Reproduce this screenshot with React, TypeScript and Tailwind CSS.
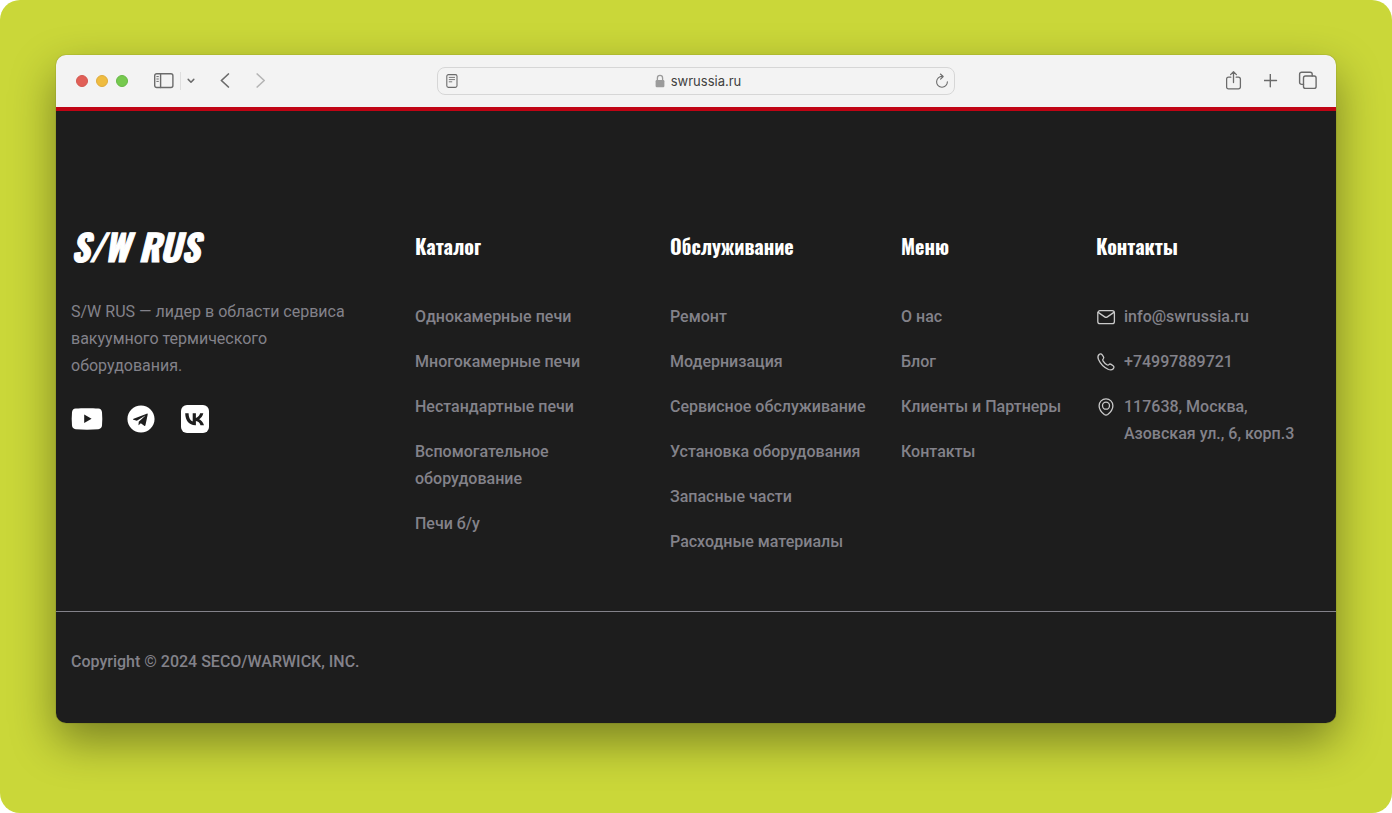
import React from 'react';
import { clsx } from "clsx";
import { FaTelegram } from "react-icons/fa";

interface FooterLink {
    label: string;
    href: string;
}

interface FooterSection {
    title: string;
    links: FooterLink[];
}

const SECTIONS: FooterSection[] = [
    {
        title: "Каталог",
        links: [
            { label: "Однокамерные печи", href: "#single" },
            { label: "Многокамерные печи", href: "#multi" },
            { label: "Нестандартные печи", href: "#custom" },
            { label: "Вспомогательное оборудование", href: "#auxiliary" },
            { label: "Печи б/у", href: "#used" },
        ],
    },
    {
        title: "Обслуживание",
        links: [
            { label: "Ремонт", href: "#repair" },
            { label: "Модернизация", href: "#upgrade" },
            { label: "Сервисное обслуживание", href: "#service" },
            { label: "Установка оборудования", href: "#install" },
            { label: "Запасные части", href: "#parts" },
            { label: "Расходные материалы", href: "#supplies" },
        ],
    },
    {
        title: "Меню",
        links: [
            { label: "О нас", href: "#about" },
            { label: "Блог", href: "#blog" },
            { label: "Клиенты и Партнеры", href: "#clients" },
            { label: "Контакты", href: "#contacts" },
        ],
    },
];

const iconProps = {
    fill: "none",
    stroke: "currentColor",
    strokeLinecap: "round" as const,
    strokeLinejoin: "round" as const,
    "aria-hidden": true,
};

const ToolButton = ({ label, className, children }: { label: string; className?: string; children: React.ReactNode }) => (
    <button type="button" aria-label={label} className={clsx("flex h-5 shrink-0 items-center justify-center text-[#6b6b6b]", className)}>
        {children}
    </button>
);

const BrowserBar = () => (
    <header className="grid h-[52px] grid-cols-[1fr_minmax(0,518px)_1fr] items-center bg-[#f3f3f3]">
        <div className="flex items-center pl-5">
            <div className="flex gap-2">
                <button type="button" aria-label="Закрыть" className="size-3 rounded-full border border-[#d35850] bg-[#e15f57]" />
                <button type="button" aria-label="Свернуть" className="size-3 rounded-full border border-[#dfac3c] bg-[#efbc40]" />
                <button type="button" aria-label="Развернуть" className="size-3 rounded-full border border-[#67b846] bg-[#76c94e]" />
            </div>
            <ToolButton label="Боковая панель" className="ml-6 w-6">
                <svg width="20" height="16" viewBox="0 0 20 16" strokeWidth="1.4" {...iconProps}>
                    <rect x="0.7" y="0.7" width="18.2" height="13.8" rx="2" />
                    <path d="M6.6.7v13.8" />
                    <path d="M2.8 3.6h1.6M2.8 6h1.6M2.8 8.4h1.6" strokeWidth="1" />
                </svg>
            </ToolButton>
            <span className="ml-1 h-[18px] w-px bg-[#dedede]" />
            <ToolButton label="Группы вкладок" className="ml-1 w-3">
                <svg width="8" height="6" viewBox="0 0 8 6" strokeWidth="1.5" {...iconProps}>
                    <path d="M1.2 1.4 4 4.2l2.8-2.800" />
                </svg>
            </ToolButton>
            <ToolButton label="Назад" className="ml-5 w-4">
                <svg width="10" height="16" viewBox="0 0 10 16" strokeWidth="1.7" {...iconProps}>
                    <path d="M8.400 1 1.400 7.500l7 6.500" />
                </svg>
            </ToolButton>
            <ToolButton label="Вперёд" className="ml-5 w-4">
                <svg className="text-[#b5b5b5]" width="10" height="16" viewBox="0 0 10 16" strokeWidth="1.7" {...iconProps}>
                    <path d="m1.200 1 7 6.500-7 6.500" />
                </svg>
            </ToolButton>
        </div>

        <div className="flex h-7 items-center justify-between rounded-lg border border-[#d6d6d6] px-1">
            <ToolButton label="Режим чтения" className="w-5">
                <svg width="12" height="14" viewBox="0 0 12 14" strokeWidth="1.1" {...iconProps}>
                    <rect x="0.8" y="0.6" width="10.2" height="12.8" rx="1.6" />
                    <path d="M3.2 3.4h5.4M3.2 5.6h5.4M3.2 7.8h2.6" strokeWidth="0.9" />
                </svg>
            </ToolButton>
            <label className="flex items-center gap-1.5">
                <svg width="10" height="14" viewBox="0 0 10 14" aria-hidden="true">
                    <path d="M2.4 7V4a2.6 2.6 0 0 1 5.2 0v3" fill="none" stroke="#9b9b9b" strokeWidth="1.3" />
                    <rect x="0.6" y="6" width="8.8" height="7.2" rx="1.2" fill="#9b9b9b" />
                </svg>
                <input
                    type="text"
                    aria-label="Адрес сайта"
                    defaultValue="swrussia.ru"
                    className="field-sizing-content bg-transparent font-['Inter',sans-serif] text-[13px] leading-5 text-[#3f3f3f] outline-none"
                />
            </label>
            <ToolButton label="Обновить" className="w-4">
                <svg width="14" height="16" viewBox="0 0 14 16" strokeWidth="1.1" {...iconProps}>
                    <path d="M7.2 3.4A5.4 5.4 0 1 0 12.4 8.8" />
                    <path d="M5.4 1 8.200 3.500 5.600 6.200" />
                </svg>
            </ToolButton>
        </div>

        <div className="flex items-center justify-end gap-[17px] pr-[18px]">
            <ToolButton label="Поделиться" className="w-5">
                <svg width="16" height="20" viewBox="0 0 16 20" strokeWidth="1.3" {...iconProps}>
                    <path d="M4.8 6.200H2.500A1.900 1.900 0 0 0 .600 8.100v7.800a1.900 1.900 0 0 0 1.900 1.900h10a1.900 1.900 0 0 0 1.900-1.900V8.100a1.900 1.900 0 0 0-1.900-1.900h-2.300" />
                    <path d="M7.500 11.600V.8M4.600 3.600 7.500.8l2.900 2.800" />
                </svg>
            </ToolButton>
            <ToolButton label="Новая вкладка" className="w-5">
                <svg width="14" height="14" viewBox="0 0 14 14" strokeWidth="1.4" {...iconProps}>
                    <path d="M6.300.3v12.400M.1 6.500h12.400" />
                </svg>
            </ToolButton>
            <ToolButton label="Обзор вкладок" className="w-5">
                <svg width="20" height="20" viewBox="0 0 20 20" strokeWidth="1.4" {...iconProps}>
                    <rect x="5.500" y="5" width="12.600" height="12.400" rx="2" />
                    <path d="M5.500 13.400H3.600a2 2 0 0 1-2-2V3.200a2 2 0 0 1 2-2h8.600a2 2 0 0 1 2 2V5" />
                </svg>
            </ToolButton>
        </div>
    </header>
);

const Socials = () => (
    <div className="mt-6 flex gap-[22px]">
        <a href="#youtube" aria-label="YouTube" className="flex size-8 items-center justify-center">
            <svg width="32" height="32" viewBox="0 0 32 32" aria-hidden="true">
                <path fill="#fff" fillRule="evenodd" d="M16 5.200c4 0 8.300.1 11.300.4 2.200.2 3.500 1.500 3.700 3.700.4 4.400.4 9 0 13.300-.2 2.200-1.500 3.500-3.700 3.700-7.500.6-15.100.6-22.600 0C2.500 26.100 1.200 24.800 1 22.600c-.4-4.400-.4-9 0-13.300.2-2.200 1.500-3.500 3.700-3.700 3-.3 7.300-.4 11.300-.4Zm-2.800 6.400v8.400l7.400-4.200-7.400-4.200Z" />
            </svg>
        </a>
        <a href="#telegram" aria-label="Telegram" className="flex size-8 items-center justify-center text-white">
            <FaTelegram size={28} />
        </a>
        <a href="#vk" aria-label="VK" className="flex size-8 items-center justify-center">
            <svg width="32" height="32" viewBox="0 0 32 32" aria-hidden="true">
                <rect x="2" y="2" width="28" height="28" rx="6" fill="#fff" />
                <path fill="#1d1d1d" d="M16.300 22.200c-6.400 0-9.900-4.400-10.100-11.900h3.400c.1 5.400 2.400 7.600 4.100 8.100v-8.100h3.200v4.600c1.800-.2 3.600-2.300 4.200-4.600h3.200c-.5 2.900-2.600 5-4.100 5.900 1.500.7 3.900 2.600 4.800 6h-3.500c-.7-2.200-2.400-3.900-4.600-4.100v4.100Z" />
            </svg>
        </a>
    </div>
);

const ColumnTitle = ({ children }: { children: React.ReactNode }) => (
    <h2 className="mb-11 font-['Oswald','Roboto',sans-serif] text-xl leading-[26px] font-bold text-white">
        {children}
    </h2>
);

const Contacts = () => (
    <address className="pt-1 not-italic">
        <ColumnTitle>Контакты</ColumnTitle>
        <ul className="flex flex-col gap-[18px] font-medium">
            <li>
                <a href="mailto:info@swrussia.ru" className="flex gap-2">
                    <svg className="mt-1 shrink-0 text-[#c9c9c9]" width="20" height="20" viewBox="0 0 20 20" strokeWidth="1.3" {...iconProps}>
                        <rect x="1.8" y="3.7" width="16.6" height="13" rx="2.2" />
                        <path d="m2.200 5.400 6.500 4.500a2.400 2.400 0 0 0 2.700 0l6.500-4.500" />
                    </svg>
                    info@swrussia.ru
                </a>
            </li>
            <li>
                <a href="tel:+74997889721" className="flex gap-2">
                    <svg className="mt-1 shrink-0 text-[#c9c9c9]" width="20" height="20" viewBox="0 0 20 20" strokeWidth="1.3" {...iconProps}>
                        <path d="M3.100 2.500c1-.9 2.200-.8 2.900.2l1.400 2c.5.700.4 1.600-.2 2.200-.7.600-.7 1.200-.2 2 1 1.600 2.300 2.900 3.900 3.900.8.500 1.400.5 2-.2.600-.6 1.500-.7 2.200-.2l2 1.400c1 .7 1.100 1.900.2 2.900-1.300 1.400-3 1.500-4.800.8C7.800 15.500 4.600 12.300 2.400 7.300c-.7-1.800-.7-3.500.7-4.800Z" />
                    </svg>
                    +74997889721
                </a>
            </li>
            <li className="flex gap-2">
                <svg className="mt-1 shrink-0 text-[#c9c9c9]" width="20" height="20" viewBox="0 0 20 20" strokeWidth="1.3" {...iconProps}>
                    <path d="M10 1.900c-3.900 0-6.900 3-6.900 6.800 0 3.500 2.200 6.400 5.200 8.800 1.200.9 2.200.9 3.400 0 3-2.400 5.200-5.300 5.200-8.800 0-3.800-3-6.800-6.900-6.800Z" />
                    <circle cx="10" cy="8.7" r="3.5" />
                </svg>
                <span>
                    117638, Москва,
                    <br />
                    Азовская ул., 6, корп.3
                </span>
            </li>
        </ul>
    </address>
);

const SiteFooter = () => (
    <footer className="border-t-4 border-[#c00414] bg-[#1d1d1d] font-['Roboto',sans-serif] text-base leading-[27px] text-[#83828a]">
        <div className="grid grid-cols-[344fr_255fr_231fr_195fr_225fr] px-[15px] pt-[118px] pb-14">
            <div className="pr-12">
                <a href="#home" className="block font-['Oswald','Roboto',sans-serif] text-4xl leading-[33px] font-bold text-white italic [-webkit-text-stroke:1px_white]">
                    S/W RUS
                </a>
                <p className="mt-9">S/W RUS — лидер в области сервиса вакуумного термического оборудования.</p>
                <Socials />
            </div>
            {SECTIONS.map((section) => (
                <nav key={section.title} aria-label={section.title} className="pt-1 pr-[30px]">
                    <ColumnTitle>{section.title}</ColumnTitle>
                    <ul className="flex flex-col gap-[18px] font-medium">
                        {section.links.map((link) => (
                            <li key={link.href}>
                                <a href={link.href} className="block transition-colors hover:text-white">{link.label}</a>
                            </li>
                        ))}
                    </ul>
                </nav>
            ))}
            <Contacts />
        </div>
        <p className="border-t border-[#83828a] px-[15px] pt-9 pb-12 font-medium">
            Copyright © 2024 SECO/WARWICK, INC.
        </p>
    </footer>
);

export default function App() {
    return (
        <main className="min-h-screen rounded-[20px] bg-[#cad739] px-14 pt-[55px] pb-[90px]">
            <div className="overflow-hidden rounded-[10px] shadow-[0_0_1px_rgba(0,0,0,0.6),0_18px_45px_rgba(0,0,0,0.4)]">
                <BrowserBar />
                <SiteFooter />
            </div>
        </main>
    );
}
